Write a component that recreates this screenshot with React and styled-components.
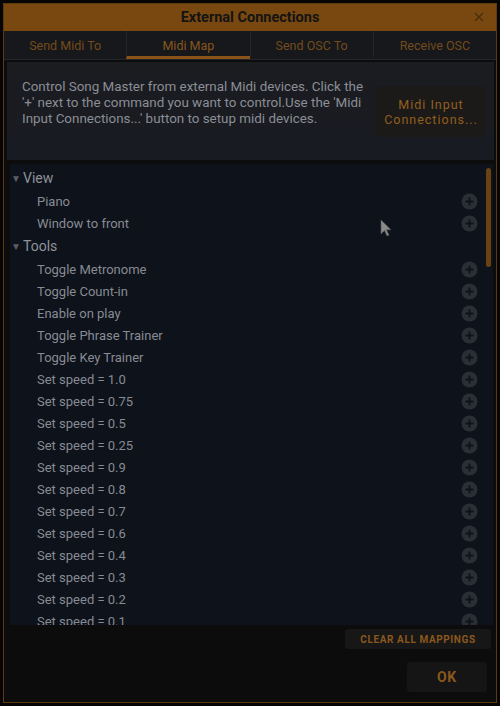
import React from "react";
import styled, { createGlobalStyle } from "styled-components";

const Global = createGlobalStyle`
  html, body { margin: 0; padding: 0; background: #050505; }
  body { font-family: Roboto, "Noto Sans", "Liberation Sans", sans-serif; }
  * { box-sizing: border-box; }
`;

const Dialog = styled.div`
  position: relative;
  margin: 3px;
  width: 494px;
  height: 700px;
  border: 1px solid #5e3a0f;
  background: #0c0c0d;
  display: flex;
  flex-direction: column;
  overflow: hidden;
`;

const TitleBar = styled.div`
  height: 27px;
  flex: none;
  background: #784810;
  display: flex;
  align-items: center;
  justify-content: center;
  position: relative;
  color: #141414;
  font-weight: 700;
  font-size: 14.5px;
`;

const Close = styled.div`
  position: absolute;
  right: 10px;
  top: 6px;
  width: 14px;
  height: 14px;
  display: flex;
  align-items: center;
  justify-content: center;
`;

const TabBar = styled.div`
  height: 29px;
  flex: none;
  display: flex;
  background: #16181b;
  border-bottom: 1px solid #24262a;
`;

const Tab = styled.div`
  flex: 1;
  display: flex;
  align-items: center;
  justify-content: center;
  font-size: 12.5px;
  color: ${(p) => (p.$active ? "#87561b" : "#744b1b")};
  border-left: ${(p) => (p.$first ? "none" : "1px solid #24262a")};
  border-bottom: 3px solid ${(p) => (p.$active ? "#8a5418" : "transparent")};
  padding-top: 3px;
`;

const Desc = styled.div`
  margin: 2px 2px 0 3px;
  height: 98px;
  flex: none;
  background: linear-gradient(180deg, #1b1c20 0%, #181b22 100%);
  display: flex;
  align-items: flex-start;
  padding: 17px 8px 0 15px;
  gap: 4px;
`;

const DescText = styled.div`
  width: 350px;
  font-size: 13.4px;
  line-height: 16px;
  color: #8b8e95;
`;

const InputButton = styled.div`
  width: 110px;
  height: 51px;
  margin-top: 7px;
  background: #1b1a19;
  border-radius: 2px;
  color: #935f1e;
  font-size: 12.5px;
  letter-spacing: 1px;
  line-height: 15px;
  display: flex;
  align-items: center;
  justify-content: center;
  text-align: center;
`;

const ListPanel = styled.div`
  margin: 4px 3px 0 6px;
  height: 461px;
  flex: none;
  background: #0e121a;
  position: relative;
  overflow: hidden;
  padding-top: 2px;
`;

const Scrollbar = styled.div`
  position: absolute;
  right: 2px;
  top: 4px;
  width: 5px;
  height: 99px;
  border-radius: 3px;
  background: #6b4312;
`;

const Header = styled.div`
  height: 24px;
  display: flex;
  align-items: center;
  padding-left: 1px;
  font-size: 14px;
  color: #8e929b;
`;

const Tri = styled.span`
  width: 12px;
  font-size: 10px;
  color: #5a5d65;
`;

const Row = styled.div`
  height: 22px;
  display: flex;
  align-items: center;
  padding-left: 27px;
  padding-right: 15px;
  font-size: 13px;
  color: #878b94;
`;

const RowLabel = styled.span`
  flex: 1;
`;

const Plus = () => (
  <svg width="17" height="17" viewBox="0 0 17 17">
    <circle cx="8.5" cy="8.5" r="8" fill="#2b2e35" />
    <path d="M8.5 4.5v8M4.5 8.5h8" stroke="#0e121a" strokeWidth="1.8" />
  </svg>
);

const Footer = styled.div`
  flex: 1;
  display: flex;
  flex-direction: column;
  align-items: flex-end;
  padding: 4px 5px 0 0;
`;

const ClearButton = styled.div`
  width: 146px;
  height: 20px;
  background: #171717;
  border-radius: 3px;
  color: #8a581c;
  font-size: 10px;
  font-weight: 700;
  letter-spacing: 0.6px;
  display: flex;
  align-items: center;
  justify-content: center;
`;

const OkButton = styled.div`
  width: 80px;
  height: 30px;
  margin-top: 13px;
  margin-right: 4px;
  background: #151515;
  border-radius: 3px;
  color: #8a581c;
  font-size: 14px;
  font-weight: 700;
  letter-spacing: 0.6px;
  display: flex;
  align-items: center;
  justify-content: center;
`;

const Cursor = styled.svg`
  position: absolute;
  left: 376px;
  top: 215px;
`;

const sections = [
  { title: "View", items: ["Piano", "Window to front"] },
  {
    title: "Tools",
    items: [
      "Toggle Metronome",
      "Toggle Count-in",
      "Enable on play",
      "Toggle Phrase Trainer",
      "Toggle Key Trainer",
      "Set speed = 1.0",
      "Set speed = 0.75",
      "Set speed = 0.5",
      "Set speed = 0.25",
      "Set speed = 0.9",
      "Set speed = 0.8",
      "Set speed = 0.7",
      "Set speed = 0.6",
      "Set speed = 0.4",
      "Set speed = 0.3",
      "Set speed = 0.2",
      "Set speed = 0.1",
    ],
  },
];

const tabs = ["Send Midi To", "Midi Map", "Send OSC To", "Receive OSC"];

export default function App() {
  return (
    <>
      <Global />
      <Dialog>
        <TitleBar>
          External Connections
          <Close>
            <svg width="10" height="10" viewBox="0 0 10 10">
              <path d="M1 1l8 8M9 1l-8 8" stroke="#4a2e0c" strokeWidth="1.3" />
            </svg>
          </Close>
        </TitleBar>
        <TabBar>
          {tabs.map((t, i) => (
            <Tab key={t} $first={i === 0} $active={i === 1}>
              {t}
            </Tab>
          ))}
        </TabBar>
        <Desc>
          <DescText>
            Control Song Master from external Midi devices. Click the '+' next to
            the command you want to control.Use the 'Midi Input Connections...'
            button to setup midi devices.
          </DescText>
          <InputButton>
            Midi Input
            <br />
            Connections...
          </InputButton>
        </Desc>
        <ListPanel>
          {sections.map((s) => (
            <React.Fragment key={s.title}>
              <Header>
                <Tri>▼</Tri>
                {s.title}
              </Header>
              {s.items.map((it) => (
                <Row key={it}>
                  <RowLabel>{it}</RowLabel>
                  <Plus />
                </Row>
              ))}
            </React.Fragment>
          ))}
          <Scrollbar />
        </ListPanel>
        <Footer>
          <ClearButton>CLEAR ALL MAPPINGS</ClearButton>
          <OkButton>OK</OkButton>
        </Footer>
        <Cursor width="14" height="20" viewBox="0 0 14 20">
          <path d="M1 1v14l3.5-3.5 2.5 5.5 2-1-2.5-5.2H11z" fill="#8a8a8a" stroke="#555" strokeWidth="0.6" />
        </Cursor>
      </Dialog>
    </>
  );
}
